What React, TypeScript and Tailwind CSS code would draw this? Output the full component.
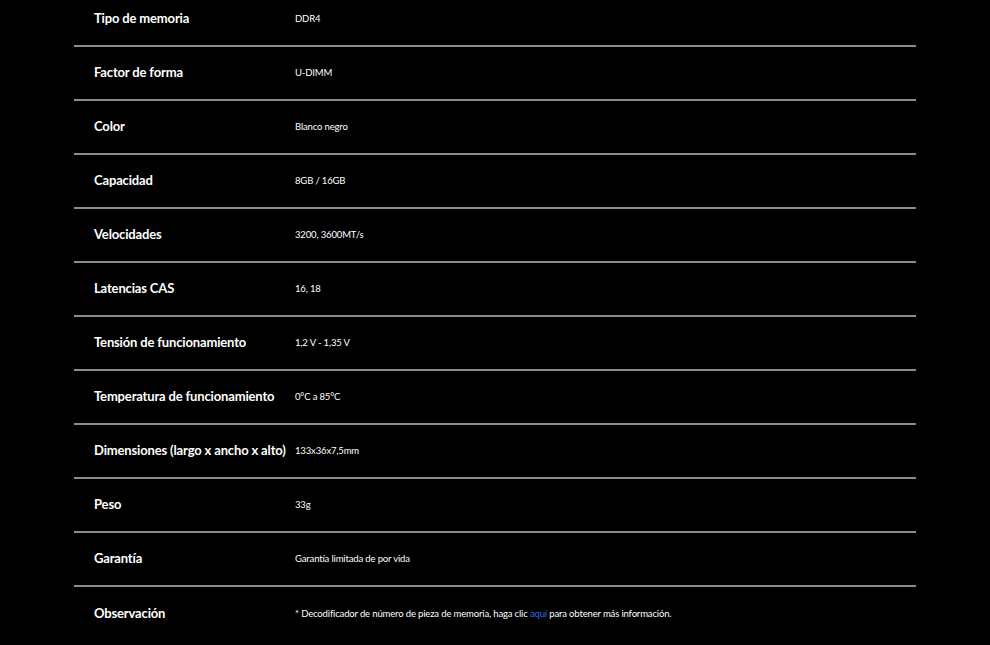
import React from 'react';

const SPECS: { label: string; value: React.ReactNode }[] = [
    { label: 'Tipo de memoria', value: 'DDR4' },
    { label: 'Factor de forma', value: 'U-DIMM' },
    { label: 'Color', value: 'Blanco negro' },
    { label: 'Capacidad', value: '8GB / 16GB' },
    { label: 'Velocidades', value: '3200, 3600MT/s' },
    { label: 'Latencias CAS', value: '16, 18' },
    { label: 'Tensión de funcionamiento', value: '1,2 V - 1,35 V' },
    { label: 'Temperatura de funcionamiento', value: '0°C a 85°C' },
    { label: 'Dimensiones (largo x ancho x alto)', value: '133x36x7,5mm' },
    { label: 'Peso', value: '33g' },
    { label: 'Garantía', value: 'Garantía limitada de por vida' },
    {
        label: 'Observación',
        value: (
            <>
                * Decodificador de número de pieza de memoria, haga clic{' '}
                <span className="text-[#2f6fe0]">aquí</span> para obtener más información.
            </>
        ),
    },
];

export default function App() {
    return (
        <div className="w-[990px] h-[645px] bg-black overflow-hidden font-['Lato','Open_Sans',sans-serif]">
            <div className="mx-[74px] mt-[-7px] flex flex-col">
                {SPECS.map((spec, i) => (
                    <div
                        key={spec.label}
                        className={`flex items-center h-[54px] ${i < SPECS.length - 1 ? 'border-b-2 border-[#8c8c8c]' : ''}`}
                    >
                        <div className="w-[221px] pl-[20px] text-[13px] font-bold text-white whitespace-nowrap tracking-[-0.15px]">
                            {spec.label}
                        </div>
                        <div className="text-[9.5px] text-white whitespace-nowrap tracking-[-0.15px] pt-[1px]">
                            {spec.value}
                        </div>
                    </div>
                ))}
            </div>
        </div>
    );
}
